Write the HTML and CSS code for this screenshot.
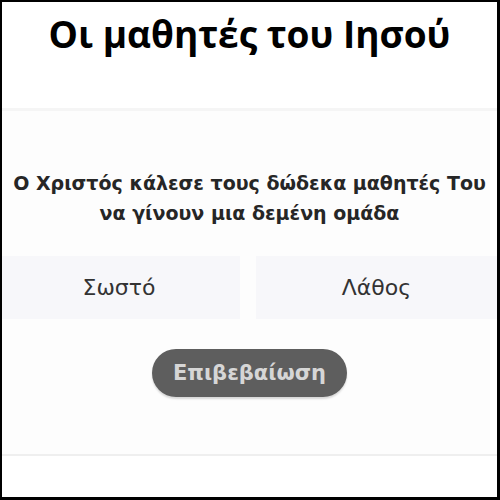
FILE: index.html
```html
<!DOCTYPE html>
<html lang="el">
<head>
<meta charset="utf-8">
<link rel="stylesheet" href="styles.css">
</head>
<body>
<div class="frame">
  <header class="header">
    <h1 class="title">Οι μαθητές του Ιησού</h1>
  </header>
  <main class="quiz">
    <p class="question">Ο Χριστός κάλεσε τους δώδεκα μαθητές Του<br>να γίνουν μια δεμένη ομάδα</p>
    <div class="options">
      <div class="option">Σωστό</div>
      <div class="option">Λάθος</div>
    </div>
    <div class="actions">
      <button class="confirm">Επιβεβαίωση</button>
    </div>
  </main>
  <footer class="footer"></footer>
</div>
</body>
</html>
```
FILE: styles.css
```css
html, body {
  margin: 0;
  padding: 0;
  background: #fff;
}
.frame {
  box-sizing: border-box;
  width: 500px;
  height: 500px;
  border: 2px solid #000;
  border-right-width: 3px;
  border-bottom-width: 3px;
  overflow: hidden;
  display: flex;
  flex-direction: column;
  background: #fff;
}
.header {
  height: 106px;
  border-bottom: 3px solid #f5f5f5;
  display: flex;
  justify-content: center;
}
.title {
  margin: 6px 0 0;
  font-family: "Open Sans", sans-serif;
  font-weight: 700;
  font-size: 37px;
  line-height: 52px;
  color: #000;
}
.quiz {
  height: 343px;
  background: #fdfdfd;
  display: flex;
  flex-direction: column;
  align-items: center;
  border-bottom: 2px solid #efefef;
}
.question {
  margin: 57px 0 0;
  width: 496px;
  text-align: center;
  font-family: "DejaVu Sans", sans-serif;
  font-weight: 700;
  font-size: 19px;
  line-height: 30px;
  color: #262626;
}
.options {
  margin: 28px 0 0 -4px;
  align-self: flex-start;
  width: 500px;
  display: grid;
  grid-template-columns: 242px 241px;
  column-gap: 16px;
}
.option {
  height: 63px;
  background: #f7f7fa;
  display: flex;
  align-items: center;
  justify-content: center;
  font-family: "DejaVu Sans", sans-serif;
  font-size: 22px;
  color: #333;
}
.actions {
  margin-top: 30px;
  display: flex;
  justify-content: center;
}
.confirm {
  width: 195px;
  height: 48px;
  border: none;
  border-radius: 24px;
  background: #5e5e5e;
  color: #d6d6d6;
  font-family: "DejaVu Sans", sans-serif;
  font-weight: 700;
  font-size: 21px;
  box-shadow: 0 2px 2px rgba(0,0,0,0.15);
  padding: 0;
}
.footer {
  flex: 1;
  background: #fff;
}
```
